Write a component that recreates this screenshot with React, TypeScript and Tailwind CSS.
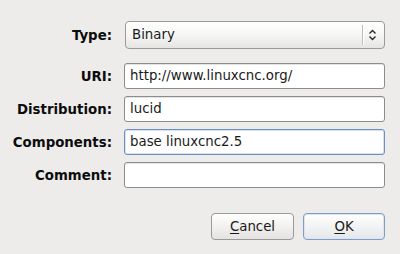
import React from "react";

const font = { fontFamily: '"DejaVu Sans", Verdana, sans-serif' };

function Label({ children }: { children: React.ReactNode }) {
  return (
    <div className="flex items-center justify-end pt-px text-[13.33px] font-bold text-[#0c0c0c]">
      {children}
    </div>
  );
}

function Entry({ value, focused }: { value: string; focused?: boolean }) {
  return (
    <div
      className={
        "flex h-[26px] items-center rounded-[3px] border bg-white px-[5px] text-[13.33px] text-[#1a1a1a] " +
        (focused
          ? "border-[#6d8fc0] shadow-[inset_0_0_0_1px_#d6e2f2]"
          : "border-[#8c8c8a] shadow-[inset_0_1px_0_#e4e4e4]")
      }
    >
      {value}
    </div>
  );
}

export default function App() {
  return (
    <main
      className="flex h-[254px] w-[400px] flex-col bg-[#edeceb] pl-0 pr-[15px] pt-[21px]"
      style={font}
    >
      <div className="grid grid-cols-[112px_1fr] gap-x-3">
        <Label>Type:</Label>
        <div className="ml-px flex h-[28px] items-center rounded-[4px] border border-[#9a9a98] bg-gradient-to-b from-white via-[#f6f6f5] to-[#e6e5e3] pl-[6px] text-[13.33px] text-[#1a1a1a]">
          <span className="flex-1">Binary</span>
          <div className="h-[20px] w-px bg-[#bdbcba] shadow-[1px_0_0_#ffffff]" />
          <svg width="21" height="20" viewBox="0 0 21 20" className="text-[#2a2a2a]">
            <path d="M6.5 10.5 L9.5 7.5 L12.5 10.5" fill="none" stroke="currentColor" strokeWidth="1.4" transform="translate(0 -2)" />
            <path d="M6.5 12.5 L9.5 15.5 L12.5 12.5" fill="none" stroke="currentColor" strokeWidth="1.4" transform="translate(0 -1)" />
          </svg>
        </div>
      </div>

      <div className="mt-[14px] grid grid-cols-[112px_1fr] gap-x-3 gap-y-[7px]">
        <Label>URI:</Label>
        <Entry value="http://www.linuxcnc.org/" />
        <Label>Distribution:</Label>
        <Entry value="lucid" />
        <Label>Components:</Label>
        <Entry value="base linuxcnc2.5" focused />
        <Label>Comment:</Label>
        <Entry value="" />
      </div>

      <div className="mt-[25px] flex justify-end gap-[9px] pr-0">
        <button className="ml-px h-[27px] w-[83px] rounded-[4px] border border-[#9a9a98] bg-gradient-to-b from-white to-[#e4e3e1] text-[13.33px] text-[#1a1a1a]">
          <span className="underline underline-offset-2">C</span>ancel
        </button>
        <button className="h-[27px] w-[82px] rounded-[4px] border border-[#7f9cc6] bg-gradient-to-b from-white to-[#e6e7ea] text-[13.33px] text-[#1a1a1a] shadow-[inset_0_0_0_1px_#dbe4f1]">
          <span className="underline underline-offset-2">O</span>K
        </button>
      </div>
    </main>
  );
}
